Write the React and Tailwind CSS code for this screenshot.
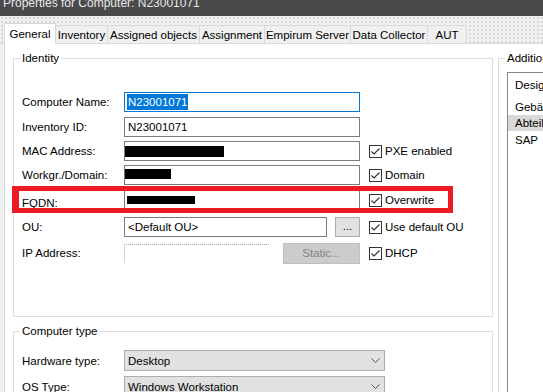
import React from "react";

const tabs = [
  { label: "General", w: "w-[52px]", active: true },
  { label: "Inventory", w: "w-[53px]" },
  { label: "Assigned objects", w: "w-[93px]" },
  { label: "Assignment", w: "w-[66px]" },
  { label: "Empirum Server", w: "w-[87px]" },
  { label: "Data Collector", w: "w-[78px]" },
  { label: "AUT", w: "w-[40px]" },
];

const Check = ({ label }) => (
  <div className="flex items-center ml-[9px]">
    <div className="w-[13px] h-[13px] border border-[#333333] bg-white flex items-center justify-center">
      <svg width="11" height="11" viewBox="0 0 11 11">
        <polyline points="1.5,5.5 4,8 9.5,2.5" fill="none" stroke="#333333" strokeWidth="1.2" />
      </svg>
    </div>
    <span className="ml-[3px]">{label}</span>
  </div>
);

const Field = ({ label, children, check, mt, labelClass = "" }) => (
  <div className={`flex items-center h-[20px] pl-[8px] ${mt}`}>
    <div className={`w-[102px] shrink-0 ${labelClass}`}>{label}</div>
    {children}
    {check && <Check label={check} />}
  </div>
);

const TextBox = ({ children, className = "" }) => (
  <div className={`w-[236px] h-[20px] border border-[#7a7a7a] bg-white flex items-center ${className}`}>
    {children}
  </div>
);

const Combo = ({ label, value, mt }) => (
  <div className={`flex items-center h-[21px] pl-[8px] ${mt}`}>
    <div className="w-[102px] shrink-0">{label}</div>
    <div className="w-[261px] h-[21px] border border-[#adadad] bg-[#e1e1e1] flex items-center justify-between pl-[3px] pr-[4px]">
      <span>{value}</span>
      <svg width="9" height="5" viewBox="0 0 9 5">
        <polyline points="0.5,0.5 4.5,4.5 8.5,0.5" fill="none" stroke="#555555" strokeWidth="1" />
      </svg>
    </div>
  </div>
);

export default function App() {
  return (
    <div className="relative w-[543px] h-[392px] overflow-hidden whitespace-nowrap bg-[#f0f0f0] text-[11.5px] leading-[16px] text-black font-['Liberation_Sans',Arial,sans-serif]">
      {/* title bar */}
      <div className="h-[16px] bg-[#4a4a4a] overflow-hidden pl-[3px]">
        <div className="-mt-[6px] text-[#e8e8e8] text-[12px] leading-[18px]">Properties for Computer: N23001071</div>
      </div>

      {/* tabs */}
      <div className="h-[28px] flex items-end pl-[4px] border-b border-[#d9d9d9] bg-[radial-gradient(circle,#d6d6d6_0.7px,transparent_0.8px)] bg-[length:4px_4px]">
        {tabs.map((t) =>
          t.active ? (
            <div
              key={t.label}
              className={`${t.w} h-[21px] -mb-px bg-white border border-b-0 border-[#d9d9d9] flex items-center justify-center pb-[1px] relative z-10`}
            >
              {t.label}
            </div>
          ) : (
            <div
              key={t.label}
              className={`${t.w} h-[18px] -ml-px bg-[#f0f0f0] border border-b-0 border-[#d9d9d9] flex items-center justify-center`}
            >
              {t.label}
            </div>
          )
        )}
      </div>

      {/* tab page */}
      <div className="ml-[4px] h-[348px] bg-white border-l border-[#d9d9d9] flex pl-[8px] pt-[6px] gap-[5px]">
        <div className="w-[480px] shrink-0 flex flex-col gap-[6px]">
          <fieldset className="h-[267px] shrink-0 border border-[#dcdcdc]">
            <legend className="ml-[6px] px-[2px]">Identity</legend>

            <Field label="Computer Name:" mt="mt-[26px]">
              <TextBox className="border-[#0078d7] pl-[2px]">
                <span className="bg-[#0078d7] text-white px-[1px]">N23001071</span>
              </TextBox>
            </Field>

            <Field label="Inventory ID:" mt="mt-[5px]">
              <TextBox className="pl-[3px]">N23001071</TextBox>
            </Field>

            <Field label="MAC Address:" mt="mt-[4px]" check="PXE enabled">
              <TextBox>
                <div className="w-[99px] h-[11px] bg-black" />
              </TextBox>
            </Field>

            <Field label="Workgr./Domain:" mt="mt-[4px]" check="Domain">
              <TextBox className="items-start pt-[3px]">
                <div className="w-[46px] h-[10px] bg-black" />
              </TextBox>
            </Field>

            <Field label="FQDN:" mt="mt-[5px]" check="Overwrite" labelClass="pt-[5px]">
              <TextBox className="pl-[2px]">
                <div className="w-[68px] h-[8px] bg-black" />
              </TextBox>
            </Field>

            <Field label="OU:" mt="mt-[7px]" check="Use default OU">
              <div className="w-[203px] h-[20px] border border-[#7a7a7a] bg-white flex items-center pl-[3px]">
                &lt;Default OU&gt;
              </div>
              <div className="ml-[8px] w-[25px] h-[20px] border border-[#adadad] bg-[#e1e1e1] flex items-center justify-center pb-[3px]">
                ...
              </div>
            </Field>

            <Field label="IP Address:" mt="mt-[6px]" check="DHCP">
              <div className="w-[145px] h-[19px] border-t border-l border-dotted border-[#a8a8a8] [border-left-style:solid] [border-left-color:#d4d4d4] bg-white" />
              <div className="ml-[14px] w-[77px] h-[21px] border border-[#bfbfbf] bg-[#cccccc] text-[#838383] flex items-center justify-center">
                Static...
              </div>
            </Field>
          </fieldset>

          <fieldset className="h-[100px] shrink-0 border border-[#dcdcdc]">
            <legend className="ml-[6px] px-[2px]">Computer type</legend>
            <Combo label="Hardware type:" value="Desktop" mt="mt-[11px]" />
            <Combo label="OS Type:" value="Windows Workstation" mt="mt-[5px]" />
          </fieldset>
        </div>

        {/* right column */}
        <div className="w-[160px] shrink-0">
          <fieldset className="h-[360px] border border-[#dcdcdc]">
            <legend className="ml-[6px] px-[2px]">Additional</legend>
            <div className="ml-[8px] mt-[6px] h-[340px] border border-[#828790] bg-white pt-[4px]">
              <div className="pl-[7px]">Designation</div>
              <div className="pl-[7px] mt-[6px]">Gebäude</div>
              <div className="pl-[7px] bg-[#d9d9d9]">Abteilung</div>
              <div className="pl-[7px] pt-[1px]">SAP</div>
            </div>
          </fieldset>
        </div>
      </div>

      {/* red highlight annotation */}
      <div className="absolute left-[12px] top-[186px] w-[441px] h-[27px] border-[5px] border-l-[7px] border-[#ed1c24] pointer-events-none" />
    </div>
  );
}
